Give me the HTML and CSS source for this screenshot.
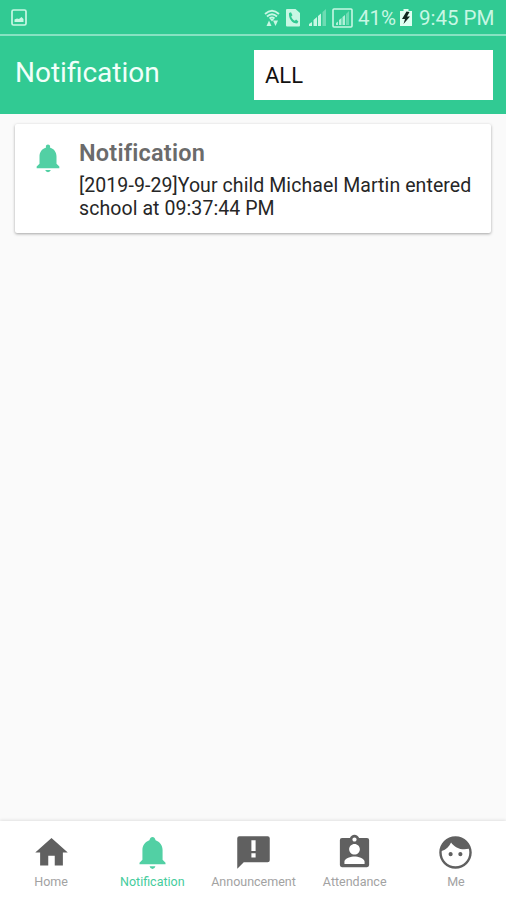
FILE: index.html
```html
<!DOCTYPE html>
<html lang="en">
<head>
<meta charset="utf-8">
<title>Notification</title>
<link rel="stylesheet" href="styles.css">
</head>
<body>
<div class="screen">
  <div class="status">
    <svg class="picture" viewBox="0 0 16 17"><rect x="1" y="1" width="14" height="15" rx="1.5" fill="none" stroke="currentColor" stroke-width="1.7"/><path d="M3.500 13V10.500L6 9.500l2 .5 2.500-2 2 2v3z" fill="currentColor"/></svg>
    <svg class="wifi" viewBox="0 0 16 18"><g fill="none" stroke="currentColor" stroke-width="1.800"><path d="M1 5Q8-1.500 15 5M3 7.500Q8 3 13 7.500M5.500 9.500Q8 7.500 10.500 9.500"/></g><path d="M6 10h4L8 12.500zM2.500 17h5L5 11.500zM9 11.500h5L11.500 17z" fill="currentColor"/></svg>
    <svg class="sim" viewBox="0 0 14 18"><path fill="currentColor" d="M1 0h8.500L14 4v12.500q0 1-1 1H1q-1 0-1-1V1q0-1 1-1z"/><path fill="#31ca93" d="M3 4l2-.8 1.500 3-1.300 1.300c.6 2 1.700 3.300 3.600 4.300l1.300-1.200 2.300 1.800-1.200 2.100C6 14.500 2.500 9.500 3 4z"/></svg>
    <svg class="signal" viewBox="0 0 17 17"><path fill="currentColor" d="M0 17v-2l3-2v4zM4.500 17v-6L8 8v9zM9 17V7l3-2.500V17z"/><path fill="currentColor" opacity=".4" d="M13.500 17V3L17 0v17z"/></svg>
    <svg class="signal-box" viewBox="0 0 21 20"><rect x="1" y="1" width="19" height="18" rx="1" fill="none" stroke="currentColor" stroke-width="1.600"/><path fill="currentColor" opacity=".85" d="M4 17v-2l2-1.500V17zM7 17v-5l2.500-2v7zM10.500 17V9L13 7v10z"/><path fill="currentColor" opacity=".4" d="M14 17V6l3-3v14z"/></svg>
    <span class="percent">41%</span>
    <svg class="battery" viewBox="0 0 12 17"><path fill="currentColor" d="M0 2h3.500V0h5v2H12v15H0z"/><path fill="#10271f" d="M6.500 2.500L2 10h3l-1.500 5L10 7.500H7L9.500 3z"/></svg>
    <span class="time">9:45 PM</span>
  </div>
  <header class="bar">
    <h1 class="title">Notification</h1>
    <div class="filter">ALL</div>
  </header>
  <main class="content">
    <article class="card">
      <svg class="card-bell" viewBox="0 0 24 24"><path fill="currentColor" d="M10 20.500h4q-.5 1.500-2 1.500t-2-1.500zM18 16v-5c0-3.070-1.640-5.640-4.500-6.320V4c0-.83-.67-1.500-1.500-1.500s-1.500.67-1.500 1.500v.68C7.630 5.360 6 7.920 6 11v5l-2 2v1.300h16V18z"/></svg>
      <div class="card-body">
        <h2 class="card-title">Notification</h2>
        <p class="card-text">[2019-9-29]Your child Michael Martin entered<br>school at 09:37:44 PM</p>
      </div>
    </article>
  </main>
  <nav class="tabs">
    <a class="tab"><svg class="tab-icon" viewBox="0 0 24 24"><path fill="currentColor" d="M10 20v-6h4v6h5v-8h3L12 3 2 12h3v8z"/></svg><span class="label">Home</span></a>
    <a class="tab active"><svg class="tab-icon" viewBox="0 0 24 24"><path fill="currentColor" d="M10.200 20.400h3.600q-.4 1.700-1.800 1.700t-1.800-1.700zM18.200 16.500V10.500C18.200 7.500 16.500 5.600 13.900 4.500C13.500 3.200 12.900 2.500 12 2.500s-1.500.7-1.900 2C7.500 5.600 5.800 7.500 5.800 10.500v6L4 18.300v1h16v-1z"/></svg><span class="label">Notification</span></a>
    <a class="tab"><svg class="tab-icon" viewBox="0 0 24 24"><path fill="currentColor" d="M20.700 2H3.300Q2 2 2 3.300V22l4-4h14.700q1.300 0 1.300-1.300V3.300Q22 2 20.700 2zM13.300 15h-2.600v-2.500h2.600zM13.300 11h-2.600V4.500h2.600z"/></svg><span class="label">Announcement</span></a>
    <a class="tab"><svg class="tab-icon" viewBox="0 0 24 24"><path fill="currentColor" d="M19.700 3h-4.880C14.400 1.840 13.300 1 12 1c-1.300 0-2.400.84-2.820 2H4.300Q3 3 3 4.300v15.400Q3 21 4.300 21h15.400q1.300 0 1.300-1.300V4.300Q21 3 19.700 3zM12 2.700c.72 0 1.300.58 1.300 1.300s-.58 1.300-1.300 1.300-1.300-.58-1.300-1.300.58-1.300 1.300-1.300zm0 4c1.820 0 3.300 1.480 3.300 3.300s-1.480 3.300-3.300 3.300-3.300-1.480-3.300-3.300 1.480-3.300 3.300-3.300zM18.200 19H5.800v-1.400c0-2 4.200-3.100 6.200-3.100s6.200 1.100 6.200 3.100z"/></svg><span class="label">Attendance</span></a>
    <a class="tab"><svg class="tab-icon" viewBox="0 0 24 24"><path fill="currentColor" d="M9 11.750c-.69 0-1.250.56-1.250 1.250s.56 1.250 1.250 1.250 1.250-.56 1.250-1.250-.56-1.250-1.250-1.250zm6 0c-.69 0-1.250.56-1.250 1.250s.56 1.250 1.250 1.250 1.250-.56 1.250-1.250-.56-1.250-1.250-1.250zM12 2C6.480 2 2 6.480 2 12s4.480 10 10 10 10-4.480 10-10S17.520 2 12 2zm0 18.500c-4.700 0-8.500-3.800-8.500-8.500 0-.29.020-.58.050-.86 2.600-1.050 4.730-2.980 5.710-5.370C11.070 8.330 14.050 10 17.420 10c.98 0 1.930-.09 2.750-.26.210.71.330 1.470.33 2.260 0 4.700-3.800 8.500-8.500 8.500z"/></svg><span class="label">Me</span></a>
  </nav>
</div>
</body>
</html>
```

FILE: styles.css
```css
* { box-sizing: border-box; }
body { margin: 0; font-family: Roboto, "Liberation Sans", sans-serif; }
.screen { width: 506px; height: 900px; display: flex; flex-direction: column; background: #fafafa; overflow: hidden; }
svg { display: block; flex: none; }

.status { height: 36px; flex: none; display: flex; align-items: center; padding: 1px 11px 0 11px; background: #31ca93; border-bottom: 2px solid #87e2c2; color: #c8f7e4; font-size: 20.5px; line-height: 24px; white-space: nowrap; }
.picture { width: 16px; height: 17px; margin-right: auto; }
.wifi { width: 16px; height: 18px; margin-right: 6px; }
.sim { width: 14px; height: 18px; margin-right: 9px; }
.signal { width: 17px; height: 17px; margin-right: 6px; }
.signal-box { width: 21px; height: 20px; margin-right: 5px; }
.percent { width: 38px; margin-right: 4px; }
.battery { width: 12px; height: 17px; margin-right: 7px; color: #e0fff2; }
.time { width: 76px; }

.bar { height: 78px; flex: none; display: flex; align-items: flex-start; justify-content: space-between; padding: 14px 13px 0 15px; background: #31ca93; }
.title { margin: 5px 0 0; font-size: 28px; line-height: 36px; font-weight: 400; color: #f1fffa; }
.filter { width: 239px; height: 50px; padding: 1px 11px 0; background: #fff; color: #111; font-size: 22px; line-height: 50px; }

.content { flex: 1; padding: 10px 15px; }
.card { height: 109px; display: flex; padding: 15px 0 0 15px; background: #fff; border-radius: 2px; box-shadow: 0 1px 3px rgba(0, 0, 0, .35); }
.card-bell { width: 34px; height: 34px; margin: 2px 14px 0 1px; color: #52d0a4; }
.card-title { margin: 0; font-size: 23.500px; line-height: 28px; letter-spacing: .2px; font-variant-ligatures: common-ligatures; font-weight: 600; color: #6b6b6b; }
.card-text { margin: 7px 0 0; font-size: 19.500px; line-height: 23px; letter-spacing: .08px; font-variant-ligatures: common-ligatures; color: #262626; white-space: nowrap; }

.tabs { height: 79px; flex: none; display: flex; background: #fff; box-shadow: 0 -1px 3px rgba(0, 0, 0, .1); }
.tab { flex: 1 1 0; min-width: 0; display: flex; flex-direction: column; align-items: center; padding: 12px 0 0 1px; color: #606060; }
.tab-icon { width: 39px; height: 39px; }
.label { margin-top: 2px; font-size: 12.500px; line-height: 16px; color: #a2a2a2; white-space: nowrap; }
.active { color: #52d0a4; }
.active .label { color: #45cc9c; }
```
